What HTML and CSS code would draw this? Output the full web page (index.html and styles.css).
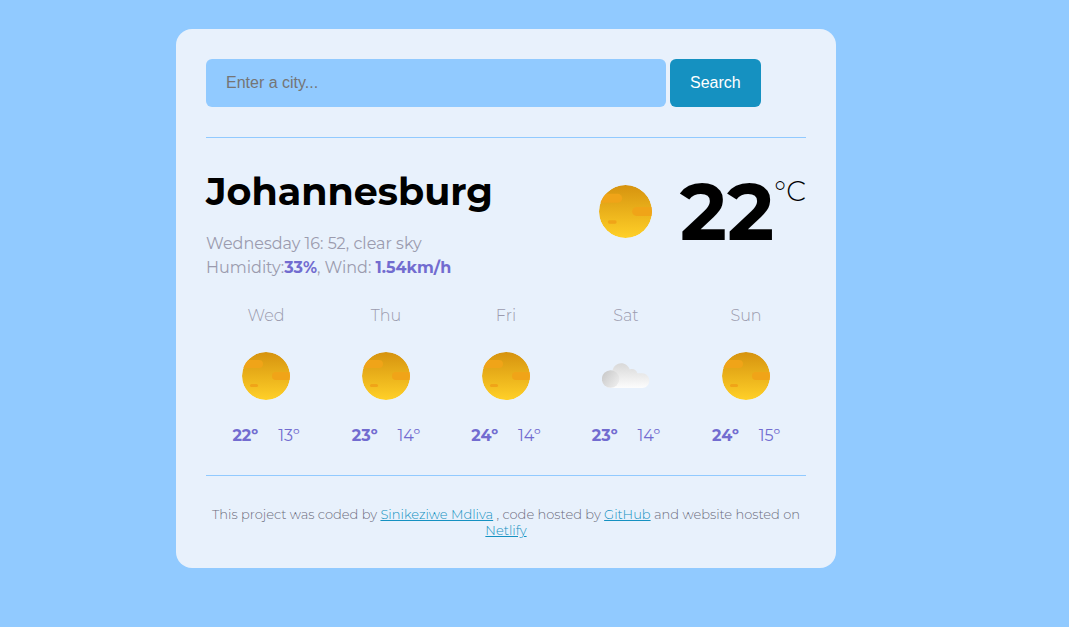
FILE: index.html
```html
<!DOCTYPE html>
<html lang="en">
<head>
<meta charset="utf-8">
<meta name="viewport" content="width=device-width, initial-scale=1">
<title>Weather</title>
<link rel="stylesheet" href="styles.css">
</head>
<body>
<svg class="defs" width="0" height="0" aria-hidden="true">
  <defs>
    <linearGradient id="sun-fill" x1="0" y1="0" x2="0" y2="1"><stop offset="0" stop-color="#d6930f"/><stop offset="1" stop-color="#ffd028"/></linearGradient>
    <linearGradient id="cloud-fill" x1="0" y1="0" x2="0" y2="1"><stop offset="0" stop-color="#d8d8d8"/><stop offset="1" stop-color="#fdfdfd"/></linearGradient>
    <linearGradient id="puff-fill" x1="0" y1="0.2" x2="1" y2="0.8"><stop offset="0" stop-color="#c4c4c4"/><stop offset="1" stop-color="#ececec"/></linearGradient>
    <clipPath id="sun-clip"><circle cx="24" cy="24" r="24"/></clipPath>
    <symbol id="sun" viewBox="0 0 48 48">
      <g clip-path="url(#sun-clip)">
        <circle cx="24" cy="24" r="24" fill="url(#sun-fill)"/>
        <rect x="-6" y="8" width="27" height="8" rx="4" fill="#f0a418"/>
        <rect x="30" y="20" width="26" height="8" rx="4" fill="#f0a418"/>
        <rect x="8" y="32" width="8" height="3" rx="1.5" fill="#f0a418"/>
      </g>
    </symbol>
    <symbol id="cloud" viewBox="0 0 48 48">
      <path d="M9 36C4 36 0 32 0 27.300C0 22 5 18 10.500 18.600C11.500 14 15 11.200 19.200 11.200C23.200 11.200 26.500 13.800 27.800 17.500C31 16 34.800 18 35.300 21.200H40C44.200 21.200 47.300 24.500 47.300 28.500C47.300 32.800 44.300 36 40 36Z" fill="url(#cloud-fill)"/>
      <circle cx="8.600" cy="27" r="8.700" fill="url(#puff-fill)" opacity="0.85"/>
    </symbol>
  </defs>
</svg>
<div class="page">
  <div class="weather-app">
    <header>
      <form class="search-form">
        <input class="search-input" type="search" placeholder="Enter a city..." aria-label="City" required>
        <button class="search-button" type="submit">Search</button>
      </form>
    </header>
    <main>
      <section class="current">
        <div>
          <h1 class="city">Johannesburg</h1>
          <p class="details">Wednesday 16: 52, clear sky<br>Humidity:<strong>33%</strong>, Wind: <strong>1.54km/h</strong></p>
        </div>
        <div class="temperature">
          <svg class="current-icon" role="img" aria-label="Clear sky"><use href="#sun"/></svg>
          <span class="value">22</span><span class="unit">°C</span>
        </div>
      </section>
      <section class="forecast">
        <div class="day">
          <div class="name">Wed</div>
          <svg class="icon" role="img" aria-label="Clear sky"><use href="#sun"/></svg>
          <div class="range"><strong>22º</strong><span>13º</span></div>
        </div>
        <div class="day">
          <div class="name">Thu</div>
          <svg class="icon" role="img" aria-label="Clear sky"><use href="#sun"/></svg>
          <div class="range"><strong>23º</strong><span>14º</span></div>
        </div>
        <div class="day">
          <div class="name">Fri</div>
          <svg class="icon" role="img" aria-label="Clear sky"><use href="#sun"/></svg>
          <div class="range"><strong>24º</strong><span>14º</span></div>
        </div>
        <div class="day">
          <div class="name">Sat</div>
          <svg class="icon" role="img" aria-label="Cloudy"><use href="#cloud"/></svg>
          <div class="range"><strong>23º</strong><span>14º</span></div>
        </div>
        <div class="day">
          <div class="name">Sun</div>
          <svg class="icon" role="img" aria-label="Clear sky"><use href="#sun"/></svg>
          <div class="range"><strong>24º</strong><span>15º</span></div>
        </div>
      </section>
    </main>
    <footer>
      This project was coded by <a href="#sinikeziwe">Sinikeziwe Mdliva</a> , code hosted by <a href="#github">GitHub</a> and website hosted on <a href="#netlify">Netlify</a>
    </footer>
  </div>
</div>
</body>
</html>
```

FILE: styles.css
```css
* {
  box-sizing: border-box;
}

body {
  margin: 0;
  background: #91caff;
  font-family: Montserrat, Inter, sans-serif;
  font-size: 16px;
  line-height: 24px;
}

.defs {
  position: absolute;
}

.page {
  padding: 29px 57px 29px 0;
}

.weather-app {
  max-width: 660px;
  margin: 0 auto;
  padding: 30px;
  border-radius: 16px;
  background: #e8f1fc;
}

header {
  padding-bottom: 30px;
  border-bottom: 1px solid #91caff;
}

.search-form {
  display: flex;
  gap: 4px;
}

.search-input,
.search-button {
  height: 48px;
  padding: 0 20px;
  border: 0;
  border-radius: 6px;
  font-family: Arial, "Liberation Sans", sans-serif;
  font-size: 16px;
}

.search-input {
  flex: 0 1 460px;
  min-width: 0;
  appearance: none;
  background: #91caff;
}

.search-input::placeholder {
  color: #757575;
}

.search-button {
  background: #1591c1;
  color: #fff;
}

main {
  padding: 30px 0 27px;
  border-bottom: 1px solid #91caff;
}

.current {
  display: flex;
  justify-content: space-between;
}

.city {
  margin: 0 0 16px;
  font-size: 38px;
  font-weight: 700;
  line-height: 48px;
}

.details {
  margin: 0;
  color: #9b9bae;
}

.details strong {
  color: #726cd0;
}

.temperature {
  display: flex;
  align-items: flex-start;
}

.current-icon {
  width: 53px;
  height: 53px;
  margin: 17px 28px 0 0;
}

.value {
  font-size: 80px;
  font-weight: 700;
  line-height: 88px;
}

.unit {
  font-size: 28px;
  font-weight: 300;
  line-height: 46px;
}

.forecast {
  display: grid;
  grid-template-columns: repeat(5, 1fr);
  padding-top: 24px;
}

.day {
  display: flex;
  flex-direction: column;
  align-items: center;
}

.name {
  color: #9b9bae;
  font-weight: 300;
}

.icon {
  width: 48px;
  height: 48px;
  margin: 24px 0;
}

.range {
  display: flex;
  gap: 20px;
  color: #726cd0;
}

footer {
  padding-top: 30px;
  color: #6d6d7c;
  font-size: 13px;
  font-weight: 300;
  line-height: 16px;
  text-align: center;
}

footer a {
  color: #1591c1;
}
```
